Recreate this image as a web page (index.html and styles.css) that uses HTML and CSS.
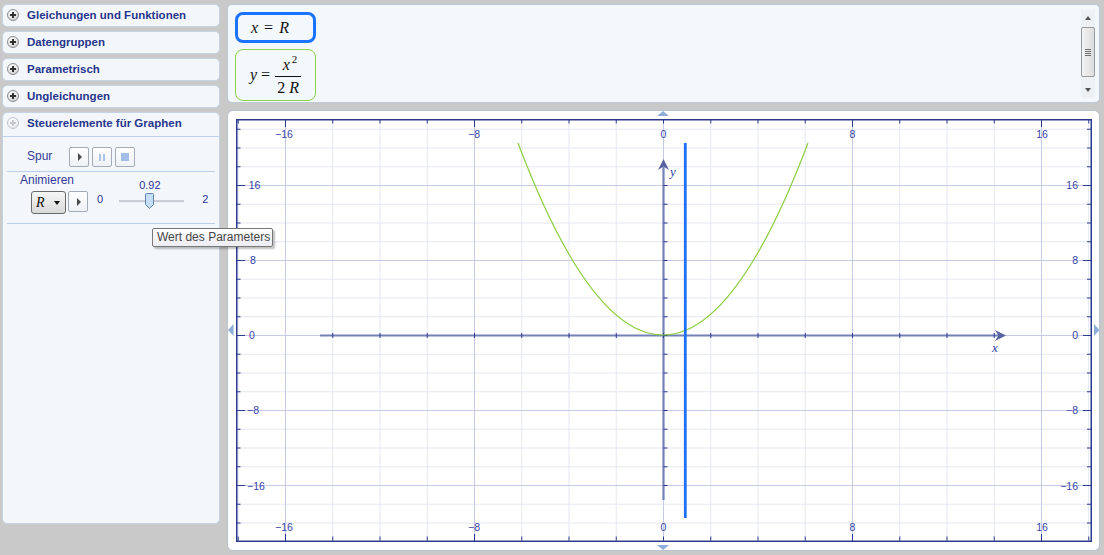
FILE: index.html
```html
<!DOCTYPE html>
<html lang="de">
<head>
    <meta charset="UTF-8">
    <title>Graph</title>
    <link rel="stylesheet" href="styles.css">
</head>
<body>

    <aside class="sidebar">
        <div class="section"><span class="expander"></span>Gleichungen und Funktionen</div>
        <div class="section"><span class="expander"></span>Datengruppen</div>
        <div class="section"><span class="expander"></span>Parametrisch</div>
        <div class="section"><span class="expander"></span>Ungleichungen</div>

        <!-- Graph controls -->
        <div class="section-open">
            <div class="section-head"><span class="expander expander-faded"></span>Steuerelemente für Graphen</div>

            <div class="trace-row">
                <span class="ctl-label">Spur</span>
                <div class="btn-group">
                    <button class="mini-btn"><span class="icon-play"></span></button>
                    <button class="mini-btn"><span class="icon-pause"></span></button>
                    <button class="mini-btn"><span class="icon-stop"></span></button>
                </div>
            </div>

            <div class="animate-block">
                <span class="ctl-label">Animieren</span>
                <div class="animate-row">
                    <button class="param-select"><i>R</i><span class="caret"></span></button>
                    <button class="mini-btn play-btn"><span class="icon-play"></span></button>
                    <span class="range-min">0</span>
                    <div class="slider">
                        <span class="slider-value">0.92</span>
                        <div class="slider-track"></div>
                        <svg class="slider-thumb" width="9" height="16" viewBox="0 0 9 16">
                            <path d="M1.5,0.5 H7.5 Q8.5,0.5 8.5,1.5 V11.5 L4.5,15.5 L0.5,11.5 V1.5 Q0.5,0.5 1.5,0.5 Z" fill="#c4def5" stroke="#5f84ad"/>
                        </svg>
                    </div>
                    <span class="range-max">2</span>
                </div>
            </div>
        </div>

        <div class="tooltip">Wert des Parameters</div>
    </aside>

    <main class="workspace">
        <section class="equations">
            <div class="eq-list">
                <div class="eq eq-x"><i>x</i><span class="eq-op">=</span><i>R</i></div>
                <div class="eq eq-y">
                    <i>y</i><span class="eq-op">=</span>
                    <span class="frac">
                        <span class="frac-num"><i>x</i><sup>2</sup></span>
                        <span class="frac-den">2 <i>R</i></span>
                    </span>
                </div>
            </div>
            <div class="scrollbar">
                <div class="sb-btn"><span class="sb-up"></span></div>
                <div class="sb-thumb"><span class="sb-grip"></span></div>
                <div class="sb-fill"></div>
                <div class="sb-btn"><span class="sb-down"></span></div>
            </div>
        </section>

        <section class="graph">
            <svg class="plot" width="871" height="439" viewBox="228 111 871 439">
                <defs>
                    <pattern id="grid-minor" patternUnits="userSpaceOnUse" x="663" y="335" width="47.25" height="18.75">
                        <path class="grid-minor" d="M0.5,0 V18.75 M0,0.5 H47.25"/>
                    </pattern>
                    <pattern id="grid-major" patternUnits="userSpaceOnUse" x="663" y="335" width="189" height="75">
                        <path class="grid-major" d="M0.5,0 V75 M0,0.5 H189"/>
                    </pattern>
                </defs>

                <rect x="237" y="120" width="854" height="421" fill="url(#grid-minor)"/>
                <rect x="237" y="120" width="854" height="421" fill="url(#grid-major)"/>

                <!-- frame ticks -->
                <line class="tick" x1="237.75" y1="121.5" x2="1091" y2="121.5" stroke-dasharray="1 46.25"/>
                <line class="tick" x1="237.75" y1="538.5" x2="1091" y2="538.5" stroke-dasharray="1 46.25"/>
                <line class="tick" x1="238.5" y1="128.75" x2="238.5" y2="541" stroke-dasharray="1 17.75"/>
                <line class="tick" x1="1089" y1="128.75" x2="1089" y2="541" stroke-dasharray="1 17.75"/>
                <path class="tick-major" d="M285.5,119 V127 M474.5,119 V127 M852.5,119 V127 M1041.5,119 V127
                    M285.5,534 V541 M474.5,534 V541 M852.5,534 V541 M1041.5,534 V541
                    M236,185.5 H245 M236,260.5 H245 M236,335.5 H245 M236,410.5 H245 M236,485.5 H245
                    M1083,185.5 H1091 M1083,260.5 H1091 M1083,335.5 H1091 M1083,410.5 H1091 M1083,485.5 H1091"/>

                <!-- labels -->
                <text class="lbl" x="284" y="138" text-anchor="middle">−16</text>
                <text class="lbl" x="474" y="138" text-anchor="middle">−8</text>
                <text class="lbl" x="663.5" y="138" text-anchor="middle">0</text>
                <text class="lbl" x="852.5" y="138" text-anchor="middle">8</text>
                <text class="lbl" x="1042" y="138" text-anchor="middle">16</text>

                <text class="lbl" x="284" y="531" text-anchor="middle">−16</text>
                <text class="lbl" x="474" y="531" text-anchor="middle">−8</text>
                <text class="lbl" x="663.5" y="531" text-anchor="middle">0</text>
                <text class="lbl" x="852.5" y="531" text-anchor="middle">8</text>
                <text class="lbl" x="1042" y="531" text-anchor="middle">16</text>

                <text class="lbl" x="254.5" y="189" text-anchor="middle">16</text>
                <text class="lbl" x="253" y="264" text-anchor="middle">8</text>
                <text class="lbl" x="252" y="339" text-anchor="middle">0</text>
                <text class="lbl" x="253" y="414" text-anchor="middle">−8</text>
                <text class="lbl" x="256" y="490" text-anchor="middle">−16</text>

                <text class="lbl" x="1078" y="189" text-anchor="end">16</text>
                <text class="lbl" x="1078" y="264" text-anchor="end">8</text>
                <text class="lbl" x="1078" y="339" text-anchor="end">0</text>
                <text class="lbl" x="1078" y="414" text-anchor="end">−8</text>
                <text class="lbl" x="1078" y="490" text-anchor="end">−16</text>

                <!-- axes -->
                <path class="axis" d="M320,335.5 H999"/>
                <path class="axis-head" d="M995,330 L1006,335.5 L995,341 L998.5,335.5 Z"/>
                <path class="axis" d="M663.5,500 V167"/>
                <path class="axis-head" d="M658,170 L663.5,159 L669,170 L663.5,166.5 Z"/>
                <line class="axis-tick" x1="332.25" y1="335.5" x2="1000" y2="335.5" stroke-dasharray="1 46.25"/>
                <line class="axis-tick axis-tick-y" x1="665.5" y1="185" x2="665.5" y2="490" stroke-dasharray="1 17.75"/>
                <text class="axis-name" x="995" y="352" text-anchor="middle">x</text>
                <text class="axis-name" x="673" y="176" text-anchor="middle">y</text>

                <!-- curves -->
                <path class="curve-y" d="M518,143 Q663,527 808,143"/>
                <line class="curve-x" x1="685.3" y1="143" x2="685.3" y2="518"/>

                <rect class="frame" x="236.75" y="119.75" width="854.5" height="421.5"/>

                <!-- pan arrows -->
                <polygon class="pan" points="657,116 669,116 663,111"/>
                <polygon class="pan" points="657,545 669,545 663,550"/>
                <polygon class="pan" points="233.5,324 233.5,336 228,330"/>
                <polygon class="pan" points="1094,324 1094,336 1099.5,330"/>
            </svg>
        </section>
    </main>

</body>
</html>
```

FILE: styles.css
```css
body {
    margin: 0;
    padding: 4px 4px 4px 2px;
    height: 555px;
    box-sizing: border-box;
    overflow: hidden;
    background-color: #c9c9c9;
    font-family: 'Liberation Sans', Arial, sans-serif;
    display: flex;
    gap: 7px;
}

/* ---------- sidebar ---------- */

.sidebar {
    width: 218px;
    display: flex;
    flex-direction: column;
    gap: 4px;
    position: relative;
}

.section,
.section-head {
    height: 23px;
    box-sizing: border-box;
    display: flex;
    align-items: center;
    padding-left: 4px;
    padding-bottom: 1px;
    font-size: 11.5px;
    font-weight: bold;
    color: #27358c;
}

.section {
    border: 1px solid #c6d3e3;
    border-radius: 5px;
    background-color: #f3f7fc;
}

.section-open {
    height: 412px;
    box-sizing: border-box;
    border: 1px solid #c6d3e3;
    border-radius: 5px;
    background-color: #f3f7fc;
}

.section-head {
    height: 24px;
    padding-bottom: 3px;
    border-bottom: 1px solid #bdd0e8;
}

.expander {
    width: 12px;
    height: 12px;
    box-sizing: border-box;
    margin-right: 8px;
    border-radius: 50%;
    border: 1px solid #8e8e8e;
    background: radial-gradient(circle at 40% 30%, #ffffff 0%, #e6e6e6 50%, #b9b9b9 100%);
    position: relative;
}

.expander::before,
.expander::after {
    content: "";
    position: absolute;
    background-color: #303030;
}

.expander::before {
    left: 2px;
    top: 4px;
    width: 6px;
    height: 2px;
}

.expander::after {
    left: 4px;
    top: 2px;
    width: 2px;
    height: 6px;
}

.expander-faded {
    border-color: #c2c6cc;
    background: radial-gradient(circle at 40% 30%, #ffffff 0%, #eef0f2 60%, #d6d9dd 100%);
}

.expander-faded::before,
.expander-faded::after {
    background-color: #c4c8ce;
}

.ctl-label {
    font-size: 12px;
    color: #35399a;
}

.trace-row {
    margin: 0 4px;
    padding: 10px 0 4px 20px;
    display: flex;
    align-items: center;
    border-bottom: 1px solid #bad0e9;
}

.trace-row .ctl-label {
    width: 42px;
    margin-top: -2px;
}

.btn-group {
    display: flex;
    gap: 3px;
}

.mini-btn {
    width: 20px;
    height: 20px;
    padding: 0;
    box-sizing: border-box;
    border: 1px solid #a3abb7;
    border-radius: 2px;
    background: linear-gradient(#ffffff, #eef1f5);
    display: flex;
    align-items: center;
    justify-content: center;
}

.icon-play {
    width: 0;
    height: 0;
    margin-left: 1px;
    border-top: 4px solid transparent;
    border-bottom: 4px solid transparent;
    border-left: 4px solid #4a4a4a;
}

.icon-pause {
    width: 2px;
    height: 7px;
    border-left: 2px solid #a9c3e6;
    border-right: 2px solid #a9c3e6;
}

.icon-stop {
    width: 8px;
    height: 8px;
    background-color: #a3bfe6;
}

.animate-block {
    margin: 0 4px;
    padding: 1px 0 9px 13px;
    border-bottom: 1px solid #bad0e9;
}

.animate-block .ctl-label {
    display: block;
    line-height: 15px;
}

.animate-row {
    margin-top: 3px;
    padding-left: 11px;
    display: flex;
    align-items: flex-start;
}

.param-select {
    width: 35px;
    height: 23px;
    padding: 0 0 0 4px;
    box-sizing: border-box;
    border: 1px solid #6b6b6b;
    border-radius: 3px;
    background: linear-gradient(#f6f6f6, #d9d9d9);
    display: flex;
    align-items: center;
    font-family: 'Liberation Serif', serif;
    font-size: 14px;
    color: #111;
}

.caret {
    margin-left: 9px;
    width: 0;
    height: 0;
    border-left: 3.5px solid transparent;
    border-right: 3.5px solid transparent;
    border-top: 4px solid #111;
}

.play-btn {
    margin-left: 2px;
    height: 21px;
}

.range-min,
.range-max {
    font-size: 11px;
    line-height: 14px;
    margin-top: 1px;
    color: #2c3396;
}

.range-min {
    margin-left: 9px;
}

.range-max {
    margin-left: 18px;
}

.slider {
    width: 65px;
    height: 23px;
    margin-left: 16px;
    position: relative;
}

.slider-track {
    position: absolute;
    left: 0;
    right: 0;
    top: 9px;
    height: 2px;
    background-color: #c9cdd5;
    border-bottom: 1px solid #eceef2;
}

.slider-thumb {
    position: absolute;
    left: 26px;
    top: 2px;
}

.slider-value {
    position: absolute;
    left: 20px;
    top: -12px;
    font-size: 11px;
    line-height: 12px;
    color: #2c3396;
}

.tooltip {
    position: absolute;
    left: 150px;
    top: 224px;
    width: 121px;
    height: 19px;
    box-sizing: border-box;
    padding-left: 4px;
    border: 1px solid #777;
    border-radius: 2px;
    background: linear-gradient(#ffffff, #ececf2);
    box-shadow: 2px 2px 2px rgba(0, 0, 0, 0.25);
    font-size: 12px;
    line-height: 17px;
    color: #474747;
    z-index: 5;
}

/* ---------- workspace ---------- */

.workspace {
    width: 873px;
    display: flex;
    flex-direction: column;
    gap: 7px;
}

.equations {
    height: 99px;
    box-sizing: border-box;
    border: 1px solid #bccadb;
    border-radius: 5px;
    background-color: #f3f8fd;
    display: flex;
    overflow: hidden;
}

.eq-list {
    flex: 1;
    padding: 7px 0 0 7px;
    display: flex;
    flex-direction: column;
    align-items: flex-start;
    gap: 6px;
}

.eq {
    width: 81px;
    box-sizing: border-box;
    border-radius: 8px;
    display: flex;
    align-items: center;
    padding-left: 13px;
    font-family: 'Liberation Serif', serif;
    font-size: 16px;
    color: #111;
    flex-shrink: 0;
}

.eq-x {
    height: 31px;
    border: 3px solid #1a73ff;
}

.eq-x .eq-op {
    margin: 0 6px;
}

.eq-y {
    height: 52px;
    padding-left: 14px;
    border: 1.5px solid #8fd24a;
}

.eq-op {
    margin: 0 4px;
}

.frac {
    display: flex;
    flex-direction: column;
    align-items: center;
    margin-left: 1px;
    margin-top: -3px;
}

.frac-num {
    padding: 0 2px 1px 6px;
    line-height: 20px;
}

.frac-num sup {
    font-size: 11px;
    font-style: normal;
    vertical-align: 7px;
    margin-left: 2px;
}

.frac-den {
    border-top: 1px solid #111;
    padding: 1px 2px 0;
    line-height: 20px;
}

.scrollbar {
    width: 14px;
    margin: 5px 4px 4px 0;
    display: flex;
    flex-direction: column;
    background-color: #eef1f4;
}

.sb-btn {
    height: 16px;
    display: flex;
    align-items: center;
    justify-content: center;
}

.sb-up,
.sb-down {
    width: 0;
    height: 0;
    border-left: 3.5px solid transparent;
    border-right: 3.5px solid transparent;
}

.sb-up {
    border-bottom: 4px solid #555;
}

.sb-down {
    border-top: 4px solid #555;
}

.sb-thumb {
    height: 50px;
    margin-top: 1px;
    box-sizing: border-box;
    border: 1px solid #9a9a9a;
    border-radius: 2px;
    background: linear-gradient(90deg, #f4f4f4, #dcdcdc);
    display: flex;
    align-items: center;
    justify-content: center;
}

.sb-grip {
    width: 6px;
    height: 7px;
    background: repeating-linear-gradient(#6e6e6e 0 1px, transparent 1px 2px);
}

.sb-fill {
    flex: 1;
}

.graph {
    height: 441px;
    box-sizing: border-box;
    border: 1px solid #b9c3d0;
    border-radius: 6px;
    background-color: #ffffff;
    overflow: hidden;
}

.plot {
    display: block;
}

.grid-minor {
    fill: none;
    stroke: #e5e7f2;
    stroke-width: 1;
}

.grid-major {
    fill: none;
    stroke: #c7cae5;
    stroke-width: 1;
}

.tick {
    stroke: #2c3a8e;
    stroke-width: 4;
}

.tick-major {
    fill: none;
    stroke: #2c3a8e;
    stroke-width: 1;
}

.frame {
    fill: none;
    stroke: #2c3a8e;
    stroke-width: 1.5;
}

.lbl {
    font-family: 'Liberation Sans', Arial, sans-serif;
    font-size: 10.5px;
    fill: #3444a6;
}

.axis {
    fill: none;
    stroke: #7381ba;
    stroke-width: 2.2;
}

.axis-head {
    fill: #56639f;
}

.axis-tick {
    stroke: #2c3a8e;
    stroke-width: 5;
}

.axis-tick-y {
    stroke-width: 4;
}

.axis-name {
    font-family: 'Liberation Serif', serif;
    font-style: italic;
    font-size: 13px;
    fill: #3444a6;
}

.curve-y {
    fill: none;
    stroke: #8ccd3f;
    stroke-width: 1.2;
}

.curve-x {
    stroke: #1f70f5;
    stroke-width: 2.8;
}

.pan {
    fill: #8eaed9;
}
```
